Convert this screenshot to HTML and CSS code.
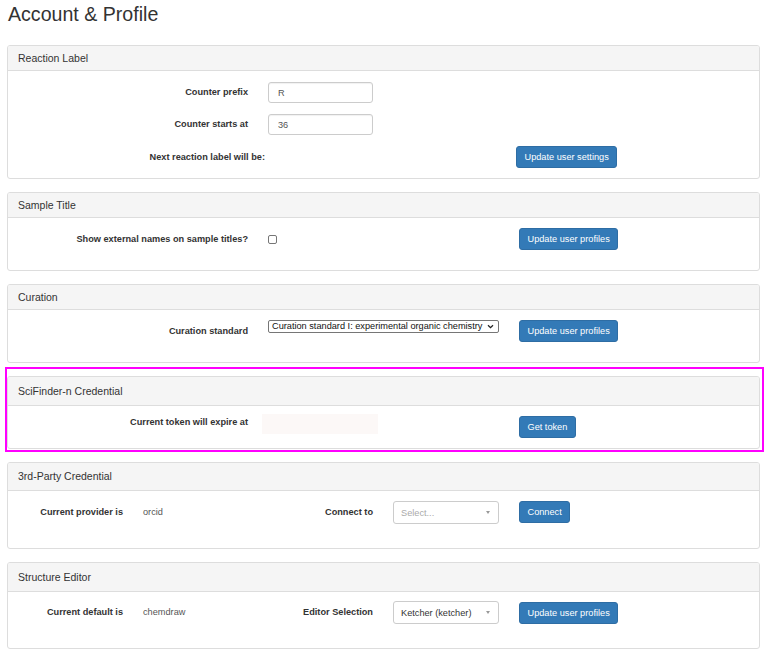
FILE: index.html
```html
<!DOCTYPE html>
<html>
<head>
<meta charset="utf-8">
<title>Account &amp; Profile</title>
<link rel="stylesheet" href="styles.css">
</head>
<body>
<div class="page">
  <h1 class="title">Account &amp; Profile</h1>

  <section class="panel p-gap">
    <div class="ph h24">Reaction Label</div>
    <div class="pb pb-reaction">
      <div class="row mb11">
        <label class="lbl w240 lh21">Counter prefix</label>
        <input class="txt ml20" type="text" value="R">
      </div>
      <div class="row mb11">
        <label class="lbl w240 lh21">Counter starts at</label>
        <input class="txt ml20" type="text" value="36">
      </div>
      <div class="row">
        <span class="lbl w257 lh22">Next reaction label will be:</span>
        <button class="btn ml251">Update user settings</button>
      </div>
    </div>
  </section>

  <section class="panel p-gap">
    <div class="ph h24">Sample Title</div>
    <div class="pb pb-std">
      <div class="row">
        <label class="lbl w240 lh22">Show external names on sample titles?</label>
        <div class="ctl ml20"><input class="cb" type="checkbox"></div>
        <button class="btn ml20">Update user profiles</button>
      </div>
    </div>
  </section>

  <section class="panel p-gap-small">
    <div class="ph h24">Curation</div>
    <div class="pb pb-std">
      <div class="row">
        <label class="lbl w240 lh22">Curation standard</label>
        <div class="ctl ml20">
          <div class="nsel"><span class="nsel-text">Curation standard I: experimental organic chemistry</span><svg class="chev" width="7" height="5" viewBox="0 0 7 5"><path d="M1 1.2 L3.5 3.6 L6 1.2" fill="none" stroke="#222" stroke-width="1.3"/></svg></div>
        </div>
        <button class="btn ml20">Update user profiles</button>
      </div>
    </div>
  </section>

  <div class="highlight">
    <section class="panel">
      <div class="ph h28">SciFinder-n Credential</div>
      <div class="pb pb-token">
        <div class="row">
          <label class="lbl w240 lh16">Current token will expire at</label>
          <div class="tokbox"></div>
          <button class="btn btn-token">Get token</button>
        </div>
      </div>
    </section>
  </div>

  <section class="panel p-gap">
    <div class="ph h27">3rd-Party Credential</div>
    <div class="pb pb-cred">
      <div class="row">
        <span class="lbl w115 lh23">Current provider is</span>
        <span class="val ml20">orcid</span>
        <span class="lbl w110 ml20 lh23">Connect to</span>
        <div class="rsel ml20"><span class="rsel-text placeholder">Select...</span><span class="rsel-arrow"></span></div>
        <button class="btn ml20">Connect</button>
      </div>
    </div>
  </section>

  <section class="panel p-gap">
    <div class="ph h28">Structure Editor</div>
    <div class="pb pb-editor">
      <div class="row">
        <span class="lbl w115 lh23">Current default is</span>
        <span class="val ml20">chemdraw</span>
        <span class="lbl w110 ml20 lh23">Editor Selection</span>
        <div class="rsel ml20"><span class="rsel-text">Ketcher (ketcher)</span><span class="rsel-arrow"></span></div>
        <button class="btn ml20 mt1">Update user profiles</button>
      </div>
    </div>
  </section>
</div>
</body>
</html>
```
FILE: styles.css
```css
* { box-sizing: border-box; }
html, body { margin: 0; padding: 0; background: #fff; }
body {
  font-family: "Liberation Sans", Arial, sans-serif;
  font-size: 9.2px;
  color: #333;
}
.page { padding: 0 8px 0 7px; }
.title {
  font-size: 19.6px;
  font-weight: normal;
  line-height: 22px;
  margin: 3px 0 20px 1px;
  color: #333;
}

.panel {
  border: 1px solid #ddd;
  border-radius: 3px;
  background: #fff;
}
.p-gap { margin-bottom: 13px; }
.p-gap-small { margin-bottom: 4px; }

.ph {
  background: #f5f5f5;
  border-bottom: 1px solid #ddd;
  border-radius: 2px 2px 0 0;
  padding-left: 10px;
  font-size: 10.5px;
  color: #333;
}
.h24 { height: 25px; line-height: 24px; }
.h27 { height: 28px; line-height: 27px; }
.h28 { height: 29px; line-height: 28px; }

.pb-reaction { padding: 11px 0 10px; }
.pb-std { padding: 10px 0 20px; }
.pb-token { padding: 8px 0 10px; }
.pb-cred { padding: 10px 0 24px; }
.pb-editor { padding: 9px 0 24px; }

.row { display: flex; align-items: flex-start; }
.mb11 { margin-bottom: 11px; }
.ml20 { margin-left: 20px; }
.ml251 { margin-left: 251px; }
.mt1 { margin-top: 1px; }

.lbl {
  font-weight: bold;
  text-align: right;
  color: #333;
  white-space: nowrap;
}
.w240 { width: 240px; }
.w257 { width: 257px; }
.w115 { width: 115px; }
.w110 { width: 110px; }
.lh16 { line-height: 16px; }
.lh21 { line-height: 21px; }
.lh22 { line-height: 22px; }
.lh23 { line-height: 23px; }

.val {
  width: 100px;
  line-height: 23px;
  color: #555;
}

.ctl { width: 231px; }

.txt {
  width: 105px;
  height: 21px;
  margin-top: 0;
  margin-bottom: 0;
  border: 1px solid #ccc;
  border-radius: 3px;
  padding: 0 9px;
  font-family: "Liberation Sans", Arial, sans-serif;
  font-size: 9.2px;
  color: #555;
  background: #fff;
  box-shadow: inset 0 1px 1px rgba(0,0,0,0.06);
  outline: none;
}

.cb {
  appearance: none;
  -webkit-appearance: none;
  display: block;
  width: 9px;
  height: 9px;
  margin: 7px 0 0 0;
  border: 1px solid #767676;
  border-radius: 2px;
  background: #fff;
}

.nsel {
  display: flex;
  align-items: center;
  width: 231px;
  height: 13px;
  border: 1px solid #767676;
  border-radius: 2px;
  background: #fff;
  padding-left: 3px;
  color: #111;
  line-height: 11px;
}
.nsel-text { flex: 1; white-space: nowrap; overflow: hidden; }
.chev { display: block; margin-right: 4px; flex: none; }

.tokbox {
  width: 116px;
  height: 20px;
  margin-left: 14px;
  background: #fcf8f7;
}

.rsel {
  display: flex;
  align-items: center;
  width: 106px;
  height: 23px;
  border: 1px solid #ccc;
  border-radius: 3px;
  background: #fff;
  padding-left: 7px;
  color: #333;
}
.rsel-text { flex: 1; white-space: nowrap; }
.placeholder { color: #aaa; }
.rsel-arrow {
  width: 0;
  height: 0;
  margin-right: 8px;
  border-top: 3px solid #999;
  border-left: 2.5px solid transparent;
  border-right: 2.5px solid transparent;
}

.btn {
  height: 22px;
  padding: 0 7.5px;
  background: #337ab7;
  border: 1px solid #2e6da4;
  border-radius: 3px;
  color: #fff;
  font-family: "Liberation Sans", Arial, sans-serif;
  font-size: 9.2px;
  line-height: 20px;
  white-space: nowrap;
  cursor: pointer;
}
.btn-token { margin-left: 141px; margin-top: 2px; }

.highlight {
  border: 2px solid #f0f;
  margin: 0 -4px 10px -2px;
  padding: 7px 2px 1px 0;
}
```
